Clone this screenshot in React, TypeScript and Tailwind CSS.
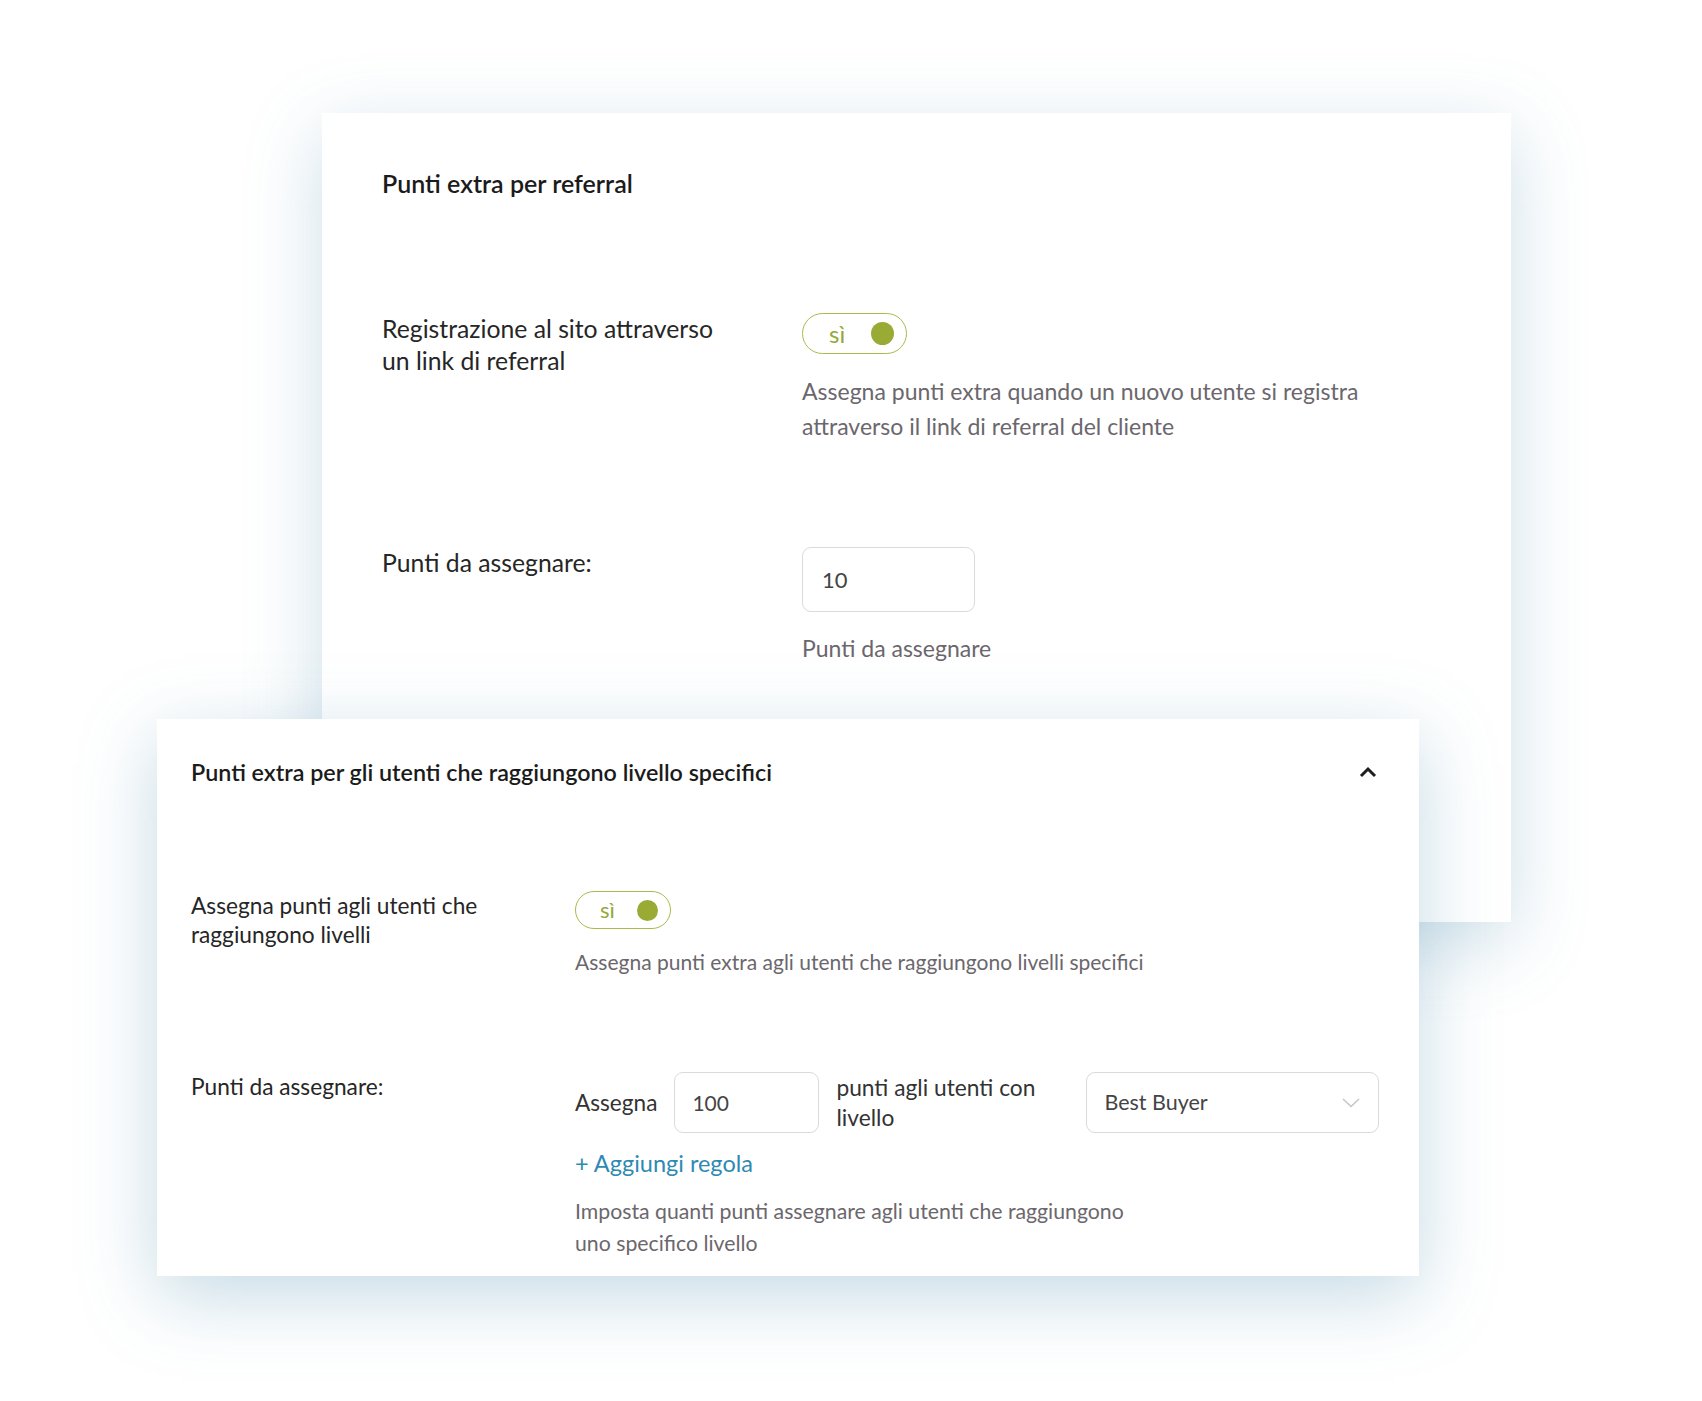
import React from 'react'

const font = { fontFamily: '"Lato", "Open Sans", sans-serif' }

function Toggle({ big }: { big?: boolean }) {
  return (
    <div
      className={`flex items-center justify-between rounded-full border-[1.5px] border-[#a9ba4c] bg-white ${
        big ? 'w-[105px] h-[41px] pl-[26px] pr-[12px]' : 'w-[96px] h-[38px] pl-[24px] pr-[12px]'
      }`}
    >
      <span className={`text-[#93a83a] leading-none ${big ? 'text-[24px]' : 'text-[22px]'}`}>sì</span>
      <span className={`rounded-full bg-[#9aab35] ${big ? 'w-[23px] h-[23px]' : 'w-[21px] h-[21px]'}`} />
    </div>
  )
}

export default function App() {
  return (
    <div className="w-[1702px] h-[1401px] bg-white overflow-hidden pt-[113px]" style={font}>
      {/* Card 1 */}
      <section className="ml-[322px] w-[1189px] h-[809px] bg-white shadow-[0_20px_70px_rgba(90,150,180,0.30)] px-[60px] pt-[54px]">
        <h2 className="text-[25px] leading-[32px] font-semibold text-[#1b1b1b]">Punti extra per referral</h2>

        <div className="grid grid-cols-[420px_1fr] mt-[114px]">
          <div className="text-[24.75px] leading-[32px] text-[#262626]">
            Registrazione al sito attraverso
            <br />
            un link di referral
          </div>
          <div>
            <Toggle big />
            <p className="mt-[20px] text-[23px] leading-[35px] text-[#6b676d]">
              Assegna punti extra quando un nuovo utente si registra
              <br />
              attraverso il link di referral del cliente
            </p>
          </div>
        </div>

        <div className="grid grid-cols-[420px_1fr] mt-[103px]">
          <div className="text-[24.75px] leading-[32px] text-[#262626]">Punti da assegnare:</div>
          <div>
            <div className="w-[173px] h-[65px] rounded-[9px] border border-[#dadada] flex items-center pl-[19px] text-[22px] text-[#444]">
              10
            </div>
            <p className="mt-[19px] text-[23px] leading-[35px] text-[#6b676d]">Punti da assegnare</p>
          </div>
        </div>
      </section>

      {/* Card 2 */}
      <section className="relative z-10 -mt-[203px] ml-[157px] w-[1262px] h-[557px] bg-white shadow-[0_20px_70px_rgba(90,150,180,0.35)] pl-[34px] pr-[42px] pt-[38px]">
        <div className="flex items-center justify-between">
          <h2 className="text-[23.3px] leading-[30px] font-semibold text-[#1b1b1b]">
            Punti extra per gli utenti che raggiungono livello specifici
          </h2>
          <svg width="18" height="12" viewBox="0 0 18 12" fill="none">
            <path d="M2 10 L9 3 L16 10" stroke="#1f1f1f" strokeWidth="3" />
          </svg>
        </div>

        <div className="grid grid-cols-[384px_1fr] mt-[104px]">
          <div className="text-[22.7px] leading-[29px] text-[#262626]">
            Assegna punti agli utenti che
            <br />
            raggiungono livelli
          </div>
          <div>
            <Toggle />
            <p className="mt-[18px] text-[21px] leading-[30px] text-[#6b676d]">
              Assegna punti extra agli utenti che raggiungono livelli specifici
            </p>
          </div>
        </div>

        <div className="grid grid-cols-[384px_1fr] mt-[95px]">
          <div className="text-[22.7px] leading-[29px] text-[#262626]">Punti da assegnare:</div>
          <div>
            <div className="flex items-center">
              <span className="text-[22.6px] text-[#333]">Assegna</span>
              <div className="ml-[17px] w-[145px] h-[61px] rounded-[9px] border border-[#dadada] flex items-center pl-[17px] text-[21px] text-[#444]">
                100
              </div>
              <span className="ml-[17px] w-[250px] text-[22.75px] leading-[30px] text-[#333]">
                punti agli utenti con
                <br />
                livello
              </span>
              <div className="w-[293px] h-[61px] rounded-[9px] border border-[#dadada] flex items-center justify-between pl-[17px] pr-[18px]">
                <span className="text-[21.5px] text-[#444]">Best Buyer</span>
                <svg width="18" height="10" viewBox="0 0 18 10" fill="none">
                  <path d="M1 1 L9 8.5 L17 1" stroke="#c6c6c6" strokeWidth="1.6" />
                </svg>
              </div>
            </div>
            <div className="mt-[15px] text-[23.5px] leading-[30px] text-[#2e8ab3]">+ Aggiungi regola</div>
            <p className="mt-[17px] text-[21.25px] leading-[32px] text-[#6b676d]">
              Imposta quanti punti assegnare agli utenti che raggiungono
              <br />
              uno specifico livello
            </p>
          </div>
        </div>
      </section>
    </div>
  )
}
